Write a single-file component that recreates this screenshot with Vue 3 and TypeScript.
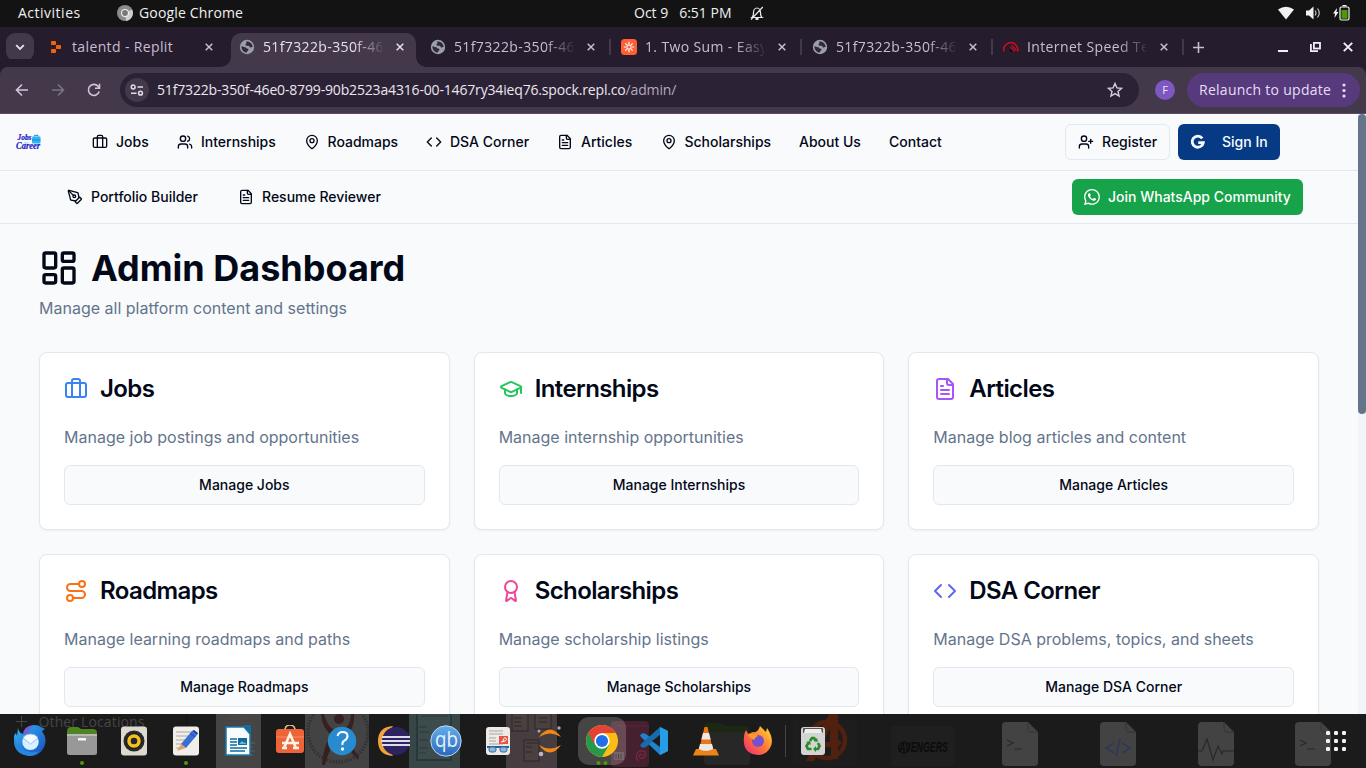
<script setup lang="ts">
interface NavItem { label: string; icon?: string; width: number }
interface Card { title: string; icon: string; color: string; text: string; action: string }
interface Tab { title: string; icon: string; active?: boolean; sep?: boolean }

const icons: Record<string, string> = {
  briefcase: '<path d="M16 20V4a2 2 0 0 0-2-2h-4a2 2 0 0 0-2 2v16"/><rect width="20" height="14" x="2" y="6" rx="2"/>',
  users: '<path d="M16 21v-2a4 4 0 0 0-4-4H6a4 4 0 0 0-4 4v2"/><circle cx="9" cy="7" r="4"/><path d="M22 21v-2a4 4 0 0 0-3-3.87"/><path d="M16 3.13a4 4 0 0 1 0 7.75"/>',
  pin: '<path d="M20 10c0 4.993-5.539 10.193-7.399 11.799a1 1 0 0 1-1.202 0C9.539 20.193 4 14.993 4 10a8 8 0 0 1 16 0"/><circle cx="12" cy="10" r="3"/>',
  code: '<path d="m16 18 6-6-6-6"/><path d="m8 6-6 6 6 6"/>',
  file: '<path d="M15 2H6a2 2 0 0 0-2 2v16a2 2 0 0 0 2 2h12a2 2 0 0 0 2-2V7Z"/><path d="M14 2v4a2 2 0 0 0 2 2h4"/><path d="M10 9H8"/><path d="M16 13H8"/><path d="M16 17H8"/>',
  userPlus: '<path d="M16 21v-2a4 4 0 0 0-4-4H6a4 4 0 0 0-4 4v2"/><circle cx="9" cy="7" r="4"/><path d="M19 8v6"/><path d="M22 11h-6"/>',
  pen: '<path d="M15.707 21.293a1 1 0 0 1-1.414 0l-1.586-1.586a1 1 0 0 1 0-1.414l5.586-5.586a1 1 0 0 1 1.414 0l1.586 1.586a1 1 0 0 1 0 1.414z"/><path d="m18 13-1.375-6.874a1 1 0 0 0-.746-.776L3.235 2.028a1 1 0 0 0-1.207 1.207L5.35 15.879a1 1 0 0 0 .776.746L13 18"/><path d="m2.3 2.3 7.286 7.286"/><circle cx="11" cy="11" r="2"/>',
  dashboard: '<rect width="7" height="9" x="3" y="3" rx="1"/><rect width="7" height="5" x="14" y="3" rx="1"/><rect width="7" height="9" x="14" y="12" rx="1"/><rect width="7" height="5" x="3" y="16" rx="1"/>',
  cap: '<path d="M21.42 10.922a1 1 0 0 0-.019-1.838L12.83 5.18a2 2 0 0 0-1.66 0L2.6 9.08a1 1 0 0 0 0 1.832l8.57 3.908a2 2 0 0 0 1.66 0z"/><path d="M22 10v6"/><path d="M6 12.5V16a6 3 0 0 0 12 0v-3.5"/>',
  route: '<circle cx="6" cy="19" r="3"/><path d="M9 19h8.5a3.5 3.5 0 0 0 0-7h-11a3.5 3.5 0 0 1 0-7H15"/><circle cx="18" cy="5" r="3"/>',
  award: '<path d="m15.477 12.89 1.515 8.526a.5.5 0 0 1-.81.47l-3.58-2.687a1 1 0 0 0-1.197 0l-3.586 2.686a.5.5 0 0 1-.81-.469l1.514-8.526"/><circle cx="12" cy="8" r="6"/>',
}

const tabIcons: Record<string, string> = {
  replit: '<g fill="#f26207"><rect x="3" y="2" width="5" height="4" rx=".7"/><rect x="8" y="6" width="5" height="4" rx=".7"/><rect x="3" y="10" width="5" height="4" rx=".7"/></g>',
  globe: '<circle cx="8" cy="8" r="7.2" fill="#9aa0a6"/><path d="M2.4 7.2c1.500-.2 2 .8 3.800 1 1 .2 1 1.300 2 1.300 1.300 0 1.600.8 1 1.800-.5.8-1.200 1-1.400 2.300C4.800 13.200 2.300 10.800 2.400 7.200M7 2.600c3.300-.6 6.600 2 6.700 5.500-1.200-.6-1.300.6-2.400.3-1-.2-.6-1.500-1.800-1.700-1.300-.2-2.500.4-3-.6-.5-1 .8-1.200 1-2z" fill="#33293c"/>',
  two: '<rect width="16" height="16" rx="3.5" fill="#ff5f33"/><g stroke="#fff" stroke-width="1.200"><path d="M8 2.800v10.400M2.800 8h10.400M4.300 4.300l7.400 7.400M11.700 4.300l-7.400 7.400"/></g><circle cx="8" cy="8" r="1.500" fill="#ff5f33"/>',
  speed: '<g fill="none" stroke="#d40d18" stroke-width="1.500"><path d="M1 12.500A7.200 7.200 0 0 1 4.500 4.600Q9 2 12.500 5.500 15.300 8.500 15 12.500"/><path d="m8.500 6.200 5 5.300M7.500 8.200l4 4.300" stroke-width="1.200"/></g><circle cx="8" cy="11.500" r="1.200" fill="#0c0810"/>',
}

const tabs: Tab[] = [
  { title: 'talentd - Replit', icon: 'replit' },
  { title: '51f7322b-350f-46', icon: 'globe', active: true },
  { title: '51f7322b-350f-46', icon: 'globe', sep: true },
  { title: '1. Two Sum - Easy', icon: 'two', sep: true },
  { title: '51f7322b-350f-46', icon: 'globe', sep: true },
  { title: 'Internet Speed Te', icon: 'speed', sep: true },
]

const nav: NavItem[] = [
  { label: 'Jobs', icon: 'briefcase', width: 85 },
  { label: 'Internships', icon: 'users', width: 126.5 },
  { label: 'Roadmaps', icon: 'pin', width: 122.5 },
  { label: 'DSA Corner', icon: 'code', width: 131 },
  { label: 'Articles', icon: 'file', width: 103.5 },
  { label: 'Scholarships', icon: 'pin', width: 138.5 },
  { label: 'About Us', width: 90 },
  { label: 'Contact', width: 60 },
]

const cards: Card[] = [
  { title: 'Jobs', icon: 'briefcase', color: '#3b82f6', text: 'Manage job postings and opportunities', action: 'Manage Jobs' },
  { title: 'Internships', icon: 'cap', color: '#22c55e', text: 'Manage internship opportunities', action: 'Manage Internships' },
  { title: 'Articles', icon: 'file', color: '#a855f7', text: 'Manage blog articles and content', action: 'Manage Articles' },
  { title: 'Roadmaps', icon: 'route', color: '#f97316', text: 'Manage learning roadmaps and paths', action: 'Manage Roadmaps' },
  { title: 'Scholarships', icon: 'award', color: '#ec4899', text: 'Manage scholarship listings', action: 'Manage Scholarships' },
  { title: 'DSA Corner', icon: 'code', color: '#6366f1', text: 'Manage DSA problems, topics, and sheets', action: 'Manage DSA Corner' },
]

const dots = [0, 1, 2].flatMap((r) => [0, 1, 2].map((c) => ({ x: c * 8, y: r * 8 })))
</script>

<template>
  <div class="screen">
    <div class="gnome">
      <span class="activities">Activities</span>
      <svg class="g-chrome" width="16" height="16" viewBox="0 0 16 16"><circle cx="8" cy="8" r="8" fill="#8b8b8b" /><path d="M8 8 15 4.500A8 8 0 0 1 9 16z" fill="#cfcfcf" /><circle cx="8" cy="8" r="4" fill="#eee" /><circle cx="8" cy="8" r="2.900" fill="#777" /></svg>
      <span class="app-name">Google Chrome</span>
      <span class="clock">Oct 9&nbsp;&nbsp; 6:51 PM</span>
      <svg class="bell" width="14" height="15" viewBox="0 0 14 15" fill="none" stroke="#e8e8e8" stroke-width="1.200"><path d="M2 11.500c1.500-1 1.500-3 1.500-5C3.500 4 5 2 7 2s3.500 2 3.500 4.500c0 2 0 4 1.500 5zM12.800 1 1 13.500" /><path d="M5.500 13h3" stroke-width="2" /></svg>
      <div class="status">
        <svg width="16" height="14" viewBox="0 0 16 14"><path d="M0 3.500Q8-2 16 3.500L8 13.500z" fill="#f2f2f2" /></svg>
        <svg width="15" height="14" viewBox="0 0 15 14"><path d="M0 4.500h3L7.500.5v13L3 9.500H0z" fill="#f2f2f2" /><path d="M9 4.500q2 2.500 0 5M11.500 2.500q3.500 4.500 0 9" fill="none" stroke="#d0d0d0" stroke-width="1.100" /></svg>
        <svg width="17" height="16" viewBox="0 0 17 16"><path d="M4 3 0 8.500h2L1.500 13l4-6H3.500z" fill="#f2f2f2" /><rect x="7" y="2" width="9" height="13" rx="1.500" fill="none" stroke="#f2f2f2" stroke-width="1.200" /><path d="M9.500.7h4" stroke="#f2f2f2" stroke-width="1.400" /><rect x="8.500" y="5" width="6" height="8.700" fill="#4e9a06" /></svg>
      </div>
    </div>

    <div class="tabstrip">
      <div class="tab-search"><svg width="10" height="7" viewBox="0 0 10 7"><path d="m1.200 1.200 3.800 3.800 3.800-3.800" fill="none" stroke="#e8dff0" stroke-width="1.800" /></svg></div>
      <div class="tabs">
        <div v-for="(t, i) in tabs" :key="i" class="tab" :class="{ active: t.active, sep: t.sep }">
          <svg class="fav" width="16" height="16" viewBox="0 0 16 16" v-html="tabIcons[t.icon]"></svg>
          <span class="tab-title" :class="{ fade: i > 0 }">{{ t.title }}</span>
          <svg class="close" width="8" height="8" viewBox="0 0 8 8"><path d="m.7.7 6.600 6.600M7.300.7.7 7.300" stroke="currentColor" stroke-width="1.500" /></svg>
        </div>
      </div>
      <svg class="plus" width="11" height="11" viewBox="0 0 11 11"><path d="M5.500 0v11M0 5.500h11" stroke="#c9bdd3" stroke-width="1.600" /></svg>
      <div class="win">
        <svg width="10" height="10" viewBox="0 0 10 10"><path d="M0 9h10" stroke="#f2eef5" stroke-width="2" /></svg>
        <svg width="11" height="10" viewBox="0 0 11 10" fill="none" stroke="#f2eef5" stroke-width="1.800"><rect x="3.900" y=".9" width="6.100" height="5.600" /><path d="M.9 2v7.100h7.100" /></svg>
        <svg width="10" height="10" viewBox="0 0 10 10"><path d="m.8.8 8.400 8.400M9.200.8.8 9.200" stroke="#f2eef5" stroke-width="1.900" /></svg>
      </div>
    </div>

    <div class="toolbar">
      <div class="toolbar-nav">
        <svg width="14" height="14" viewBox="0 0 14 14" fill="none" stroke="#d2c4dc" stroke-width="1.600"><path d="M13 7H1.500M7 1.500 1.500 7 7 12.500" /></svg>
        <svg width="14" height="14" viewBox="0 0 14 14" fill="none" stroke="#7d7386" stroke-width="1.600"><path d="M1 7h11.500M7 1.500 12.500 7 7 12.500" /></svg>
        <svg width="14" height="14" viewBox="0 0 14 14" fill="none" stroke="#d2c4dc" stroke-width="1.600"><path d="M12.200 8.500A5.500 5.500 0 1 1 11 3.200L12.500 5M12.500.8v4.400H8" /></svg>
      </div>
      <div class="omnibox">
        <span class="site"><svg width="14" height="12" viewBox="0 0 14 12" fill="none" stroke="#e4dbe9" stroke-width="1.500"><circle cx="3.200" cy="3" r="1.900" /><path d="M7.500 3H13M1 9.200h5.500" /><circle cx="10.500" cy="9.200" r="1.900" /></svg></span>
        <span class="url">51f7322b-350f-46e0-8799-90b2523a4316-00-1467ry34ieq76.spock.repl.co<span>/admin/</span></span>
        <svg class="star" width="16" height="16" viewBox="0 0 16 16"><path d="m8 1.500 1.900 4.400 4.700.4-3.600 3.100 1.100 4.700L8 11.600l-4.100 2.500L5 9.400 1.400 6.300l4.700-.4z" fill="none" stroke="#d8cce0" stroke-width="1.400" /></svg>
      </div>
      <span class="avatar">F</span>
      <div class="relaunch"><span>Relaunch to update</span><svg width="4" height="15" viewBox="0 0 4 15" fill="#eadcf7"><circle cx="2" cy="2" r="1.600" /><circle cx="2" cy="7.500" r="1.600" /><circle cx="2" cy="13" r="1.600" /></svg></div>
    </div>

    <div class="page">
      <div class="content">
        <header class="top-nav">
          <svg class="logo" width="26" height="18" viewBox="0 0 26 18">
            <text x="8" y="10.500" fill="#54c4ff" font-size="4" font-family="Liberation Serif, serif" font-style="italic">for</text>
            <rect x="16" y="3.500" width="8.500" height="7" rx="1" fill="#2fb4f5" /><path d="M18.500 3.500V2.300H22v1.200M16 7h8.500" fill="none" stroke="#1689d6" />
            <g fill="#1717c4" stroke="#1717c4" stroke-width=".2" font-family="Liberation Serif, serif" font-style="italic" font-weight="bold"><text x="1.500" y="7" font-size="8.500" textLength="14" lengthAdjust="spacingAndGlyphs">Jobs</text><text x="0" y="16" font-size="9.500" textLength="24" lengthAdjust="spacingAndGlyphs">Career</text></g>
          </svg>
          <nav class="links">
            <a v-for="n in nav" :key="n.label" :style="{ width: n.width + 'px' }">
              <svg v-if="n.icon" class="line" width="16" height="16" viewBox="0 0 24 24" v-html="icons[n.icon]"></svg>{{ n.label }}
            </a>
          </nav>
          <button class="btn register"><svg class="line" width="16" height="16" viewBox="0 0 24 24" v-html="icons.userPlus"></svg>Register</button>
          <button class="btn signin"><svg width="16" height="16" viewBox="0 0 16 16"><path d="M12.300 4.300A5.600 5.600 0 1 0 13.300 8.700H8.200" fill="none" stroke="#f8fafc" stroke-width="2.800" /></svg>Sign In</button>
        </header>
        <div class="sub-nav">
          <a><svg class="line" width="16" height="16" viewBox="0 0 24 24" v-html="icons.pen"></svg>Portfolio Builder</a>
          <a><svg class="line" width="16" height="16" viewBox="0 0 24 24" v-html="icons.file"></svg>Resume Reviewer</a>
          <button class="btn whatsapp"><svg width="16" height="16" viewBox="0 0 16 16"><path d="M13.601 2.326A7.850 7.850 0 0 0 7.994 0C3.627 0 .068 3.558.064 7.926c0 1.399.366 2.760 1.057 3.965L0 16l4.204-1.102a7.900 7.900 0 0 0 3.790.965h.004c4.368 0 7.926-3.558 7.930-7.930A7.900 7.900 0 0 0 13.600 2.326zM7.994 14.521a6.600 6.600 0 0 1-3.356-.920l-.240-.144-2.494.654.666-2.433-.156-.251a6.560 6.560 0 0 1-1.007-3.505c0-3.626 2.957-6.584 6.591-6.584a6.560 6.560 0 0 1 4.660 1.931 6.560 6.560 0 0 1 1.928 4.660c-.004 3.639-2.961 6.592-6.592 6.592m3.615-4.934c-.197-.099-1.170-.578-1.353-.646-.182-.065-.315-.099-.445.099-.133.197-.513.646-.627.775-.114.133-.232.148-.430.050-.197-.100-.836-.308-1.592-.985-.590-.525-.985-1.175-1.103-1.372-.114-.198-.011-.304.088-.403.087-.088.197-.232.296-.346.100-.114.133-.198.198-.330.065-.134.034-.248-.015-.347-.050-.099-.445-1.076-.612-1.470-.160-.389-.323-.335-.445-.340-.114-.007-.247-.007-.380-.007a.730.730 0 0 0-.529.247c-.182.198-.691.677-.691 1.654s.710 1.916.810 2.049c.098.133 1.394 2.132 3.383 2.992.470.205.840.326 1.129.418.475.152.904.129 1.246.080.380-.058 1.171-.480 1.338-.943.164-.464.164-.860.114-.943-.049-.084-.182-.133-.380-.232" fill="#fff" /></svg>Join WhatsApp Community</button>
        </div>

        <main>
          <h1><svg class="line" width="40" height="40" viewBox="0 0 24 24" v-html="icons.dashboard"></svg>Admin Dashboard</h1>
          <p class="lead">Manage all platform content and settings</p>
          <div class="grid">
            <section v-for="c in cards" :key="c.title" class="card">
              <h2><svg class="line" width="24" height="24" viewBox="0 0 24 24" :style="{ color: c.color }" v-html="icons[c.icon]"></svg>{{ c.title }}</h2>
              <p>{{ c.text }}</p>
              <button>{{ c.action }}</button>
            </section>
          </div>
        </main>
      </div>
      <div class="scrollbar"><div class="thumb"></div></div>
    </div>

    <div class="dock">
      <svg class="ghosts" width="1366" height="54" viewBox="0 0 1366 54">
        <defs><clipPath id="figure"><rect x="305" y="0" width="64" height="54" /></clipPath></defs>
        <path d="M16 7.500h11M21.500 2v11" stroke="#444" />
        <text x="38.500" y="13" class="ghost-text" textLength="106" fill="#454545">Other Locations</text>
        <path d="M186.500 0v54" stroke="#151515" />
        <rect x="216" y="0" width="45" height="54" fill="#454545" />
        <g stroke="#5b4a49" stroke-width=".8"><path d="M231 2h14M226 5h24M220 9h35" /><path d="M249 29h6M249 33h4M249 37h6M249 41h4" stroke="#666" /></g>
        <rect x="305" y="0" width="64" height="54" fill="#434343" />
        <g clip-path="url(#figure)">
          <circle cx="338" cy="18" r="30" fill="none" stroke="#2b2b2b" stroke-width="3.500" stroke-dasharray="1.500 1.500" opacity=".7" />
          <g fill="#362020"><path d="M324 0q3 13 12 17l6 0q9-5 9-17l3 0q1 14-7 20l-14 2q-11-7-12-22zM331 21q-8 12-9 30l3 0q4-17 12-25zM343 21q4 14 15 25l1-3q-8-9-9-22z" /><circle cx="339" cy="5" r="5" /></g>
        </g>
        <rect x="409" y="0" width="51" height="54" fill="#384648" />
        <path d="M417 0v46h34V0" fill="#3d4b4c" stroke="#25393c" stroke-width="2" /><path d="M421 2h27M419 13h8M419 18h10M419 26h9M419 34h9M419 39h7" stroke="#28383a" />
        <rect x="506" y="0" width="51" height="54" fill="#463d40" />
        <g fill="#49403f" stroke="#392c30" stroke-width="1.500"><path d="M512 0v17h16V0M535 0v15h16V0" /><rect x="524" y="26" width="15" height="21" /></g><path d="M514 4h8M514 8h7M514 12h8M539 4h8M539 8h8M526 29h12M526 33h6M526 38h6" stroke="#302529" />
        <rect x="611" y="7" width="38" height="46" rx="4" fill="#45202e" /><path d="M616 12h33" stroke="#642238" /><path d="M638 47q-4-7 2-10 7-1 5 5-4 5-6 0 2-3 4-1" fill="none" stroke="#792943" stroke-width="1.300" />
        <rect x="578" y="3" width="48" height="48" rx="11" fill="#ffffff" opacity=".19" />
        <path d="M614 38h10v8h-10z" fill="#77656c" /><path d="M616 40v5M618.500 40v5M621 40v5" stroke="#55434b" />
        <path d="M704 13q0-4 4-4h13l5 3h20q3 0 3 4v3h-45z" fill="#1b2913" /><rect x="704" y="18" width="46" height="33" rx="4" fill="#272727" />
        <rect x="793" y="0" width="64" height="52" fill="#1e1d1d" />
        <circle cx="827" cy="26" r="18" fill="none" stroke="#52200f" stroke-width="4.500" /><path d="m829 0 9 0v45h-7V33h-10l-7 14h-8zM830 14l-6 14h6z" fill="#52200f" /><path d="m834 22 8 7-8 7z" fill="#52200f" />
        <rect x="891" y="12" width="64" height="40" rx="3" fill="#1f1f1f" /><circle cx="904" cy="33.500" r="5.500" fill="none" stroke="#0c0c0c" stroke-width="1.200" /><text x="899" y="38" class="avengers" textLength="49" lengthAdjust="spacingAndGlyphs" fill="#0c0c0c">AVENGERS</text>
        <g v-for="x in [1002, 1100, 1198, 1295]" :key="x"><path :d="`M${x + 4} 8h22l10 10v30q0 4-4 4h-28q-4 0-4-4V12q0-4 4-4`" fill="#434343" /><path :d="`M${x + 26} 8v7q0 3 3 3h7`" fill="none" stroke="#343434" /></g>
        <g fill="none" stroke="#292929" stroke-width="1.200"><path d="m1007 26 6 3-6 3M1014 35h8M1300 26l6 3-6 3M1307 35h8M1198 37h4l5-12 6 21 5-14 4 8 1-3h11" /><path d="m1114 29-8 5 8 5M1122 29l8 5-8 5M1120 25l-4 17" stroke="#303858" stroke-width="1.700" /></g>
      </svg>

      <div class="apps">
        <svg viewBox="0 0 32 32"><defs><linearGradient id="tb" x2="1" y2="1"><stop stop-color="#35b5f5" /><stop offset="1" stop-color="#154dbd" /></linearGradient></defs><path d="M4 3q1 5 5 6Q11 1 20 0q5 0 7 2l4 2-3 2q6 8 2 16-4 9-14 9Q1 30 0 17q-1-7 2-9l1 3z" fill="url(#tb)" /><path d="M9 10Q9 1 20 0q-5 4-5 9z" fill="#6a63dc" /><ellipse cx="16.500" cy="17" rx="8.200" ry="8" fill="#d7efff" /><path d="m9 13 7.500 6L24 13q-2-4-7.500-4T9 13" fill="#f5fbff" stroke="#75b5eb" stroke-width=".8" /><path d="M0 13q3 12 15 14 6 1 10-1-4 5-10 5Q1 29 0 16z" fill="#2787e0" /></svg>
        <svg viewBox="0 0 32 32"><path d="M1 7q0-5 4-5h7l3 2h12q4 0 4 4v4H1z" fill="#4e8520" /><rect x="1" y="9" width="30" height="21" rx="2.500" fill="#989898" /><path d="M1 10h30" stroke="#b8b8b8" stroke-width="2" /><rect x="12" y="13" width="8" height="2.500" fill="#f5f5f5" /></svg>
        <svg viewBox="0 0 32 32"><rect x="3" y="1.500" width="26" height="29" rx="3" fill="#ded9cf" /><circle cx="16" cy="16" r="10.500" fill="#292929" /><circle cx="16" cy="16" r="7.300" fill="#f3c020" stroke="#111" /><circle cx="16" cy="16" r="3.300" fill="#252525" /></svg>
        <svg viewBox="0 0 32 32"><rect x="3" y="1.500" width="26" height="29" rx="3" fill="#f1eee9" /><path d="M6 7h17M6 11h13M6 15h15M6 19h8M6 23h7" stroke="#aca79e" /><path d="m11 19 11-13 5 4-11 13z" fill="#386ed6" /><path d="m22 6 2-1 4 3-1 2z" fill="#173f98" /><path d="m11 19 5 4-9 3z" fill="#dca170" /><path d="m20 8 5 4" stroke="#174aaa" /></svg>
        <svg viewBox="0 0 32 32"><path d="M4 2h18l6 7v21H4z" fill="#f9fcff" stroke="#177cac" stroke-width="1.500" /><path d="M21 0h8v9z" fill="#176c9d" /><path d="M8 14h7M8 17h7M8 20h7M8 23h17M8 26h15" stroke="#126a9c" stroke-width="1.300" /><rect x="16" y="13" width="9" height="7" fill="#126a9c" /><path d="m17 19 3-3 2 2 1-1 1 2" fill="#69bdc9" /></svg>
        <svg viewBox="0 0 32 32"><path d="M11 6V4q1-4 5-4t5 4v2" fill="none" stroke="#eac286" stroke-width="1.500" /><rect x="2" y="4" width="28" height="24" rx="3" fill="#ee6439" /><path d="M2 12h28" stroke="#f68c69" /><path d="m10 23 6-14 6 14M8 18h17M8 23h5M19 23h6" fill="none" stroke="#fff4e9" stroke-width="2.600" /></svg>
        <svg viewBox="0 0 32 32"><circle cx="16" cy="16" r="14.200" fill="#278bd0" /><path d="M11.500 11q1-4 5-4 5 0 5 4 0 3-3.500 5-2 1-1.500 4" fill="none" stroke="#fff" stroke-width="2" /><circle cx="16.500" cy="24" r="1.700" fill="#fff" /></svg>
        <svg viewBox="0 0 32 32"><path d="M15 1Q0 2 0 16t15 15Q4 16 15 1" fill="#f4a33b" /><circle cx="18" cy="16" r="14" fill="#2d2361" /><g stroke="#dcdde9" stroke-width="2"><path d="M4 12h28M3 16h29M4 20h28" /></g></svg>
        <svg viewBox="0 0 32 32"><defs><linearGradient id="qb" x2="0" y2="1"><stop stop-color="#65aeea" /><stop offset="1" stop-color="#2b67bd" /></linearGradient></defs><circle cx="16" cy="16" r="15.200" fill="url(#qb)" stroke="#b8d8f2" /><text x="5" y="21.500" class="qb" textLength="23" lengthAdjust="spacingAndGlyphs">qb</text></svg>
        <svg viewBox="0 0 32 32"><rect x="4" y="2" width="24" height="28" rx="3" fill="#eeeae7" /><path d="M7 6h14M7 9h14M7 13h7M7 16h7M7 19h14" stroke="#aaa5a1" /><rect x="17" y="11" width="9" height="8" fill="#e45546" /><path d="M19 17q7-1 5-4-3-1-3 4" stroke="#fff" fill="none" /><path d="M5 22h22" stroke="#245fa5" stroke-width="2" /><rect x="7" y="22" width="7" height="5" rx="2" fill="#8fb9d2" stroke="#336bad" /><rect x="18" y="22" width="7" height="5" rx="2" fill="#8fb9d2" stroke="#336bad" /></svg>
        <svg viewBox="0 0 32 32"><path d="M5 12Q16-3 27 12 16 5 5 12M5 20q11 15 22 0-11 7-22 0" fill="#ef8815" /><circle cx="5" cy="6" r="1.500" fill="#aaa8a9" /><circle cx="25" cy="3" r="1.700" fill="#aaa8a9" /><circle cx="7" cy="29" r="2.300" fill="#b7b7bf" /></svg>
        <svg viewBox="0 0 32 32"><circle cx="16" cy="16" r="16" fill="#fbbd13" /><path d="M16 16 2.200 8A16 16 0 0 0 16 32l7-12z" fill="#269849" /><path d="M2.200 8a16 16 0 0 1 27.600 0H16L9 20z" fill="#e44234" /><circle cx="16" cy="16" r="7.700" fill="#fff" /><circle cx="16" cy="16" r="6.100" fill="#226ee7" /></svg>
        <svg viewBox="0 0 32 32"><path d="m22 2 8 4v20l-8 4L3 12l-1-2 3-2 3 1 14 11z" fill="#1f83cb" /><path d="m22 2 8 4v20l-8 4z" fill="#289de7" /><path d="M22 10 8 22l-3 1-3-2 1-2L22 2z" fill="#186ca9" /><path d="m22 10-8 6 8 6z" fill="#1c1c1c" /></svg>
        <svg viewBox="0 0 32 32"><path d="m6 24-3 6.500h26L26 24z" fill="#eb8416" /><path d="M14.500 2h3L23 25q-7 3.500-14 0z" fill="#ef7514" /><path d="m13 8-1.700 6.500h9.400L19 8zM10 19l-1.300 5q7 4 14.600 0L22 19z" fill="#ece9e5" /></svg>
        <svg viewBox="0 0 32 32"><defs><linearGradient id="ff" x1="1" x2="0" y1="0" y2="1"><stop stop-color="#ffe332" /><stop offset=".5" stop-color="#ff7836" /><stop offset="1" stop-color="#ef247a" /></linearGradient></defs><path d="m4 5 2 4 5-2Q16 8 18 1l6 6 1-4q7 10 4 18-4 9-13 9Q3 29 2 18q-1-8 2-13" fill="url(#ff)" /><circle cx="16" cy="16" r="6" fill="#7850cc" /><path d="M6 10q6-3 10 1-3 1-4 4-3-1-6-5" fill="#ff9d24" /></svg>
        <i class="divider"></i>
        <svg viewBox="0 0 32 32"><rect x="4" y="2" width="24" height="28" rx="3" fill="#d4d4d4" /><rect x="6" y="3" width="20" height="5" rx="1" fill="#555" /><path d="M8 4h16l1 4H7z" fill="#eee" /><g fill="none" stroke="#288b28" stroke-width="2.700"><path d="m13 16 2-3h2l2 3M21 18l1.500 3-1.500 3h-3M14.500 24H11l-1.500-3 2-3" /></g><path d="m20 13 1 4-4-1zM19 21v6l-3-3zM9 17l4-1 1 4z" fill="#288b28" /></svg>
      </div>
      <svg class="grid-dots" width="20" height="20" viewBox="0 0 20 20" fill="#f3f3f3"><rect v-for="(d, i) in dots" :key="i" :x="d.x" :y="d.y" width="4" height="4" rx="1.200" /></svg>
      <svg class="running" width="1366" height="6" viewBox="0 0 1366 6" fill="#4e9a06"><circle cx="82" cy="3" r="2" /><circle cx="186" cy="3" r="2" /><circle cx="598.500" cy="3" r="2" /><circle cx="605.500" cy="3" r="2" /></svg>
    </div>
  </div>
</template>

<style>
html, body { margin: 0; overflow: hidden; background: #131313; }
</style>

<style scoped>
* { box-sizing: border-box; }
svg { display: block; flex: none; }
.screen { width: 1366px; height: 768px; overflow: hidden; display: flex; flex-direction: column; position: relative; font-family: "Open Sans", "Noto Sans", sans-serif; }
.gnome { height: 27px; flex: none; background: #131313; color: #f0f0f0; font-size: 14px; display: grid; grid-template-columns: 99px 22px 495px 116px 1fr auto; align-items: center; padding: 0 16px 0 18px; line-height: 25px; white-space: nowrap; }
.gnome > span { padding-bottom: 2px; }
.g-chrome { margin-top: -1px; }
.activities { letter-spacing: .5px; }
.app-name { letter-spacing: .16px; }
.status { display: flex; align-items: center; gap: 12px; margin-top: -2px; }
.tabstrip { height: 40px; flex: none; background: #251c2e; display: flex; align-items: center; padding-left: 6px; }
.tab-search { width: 28px; height: 28px; border-radius: 9px; background: #43394b; display: grid; place-items: center; margin-right: 6px; }
.tabs { display: flex; height: 40px; }
.tab { width: 191px; height: 34px; margin-top: 6px; display: flex; align-items: center; padding: 0 18px 6px 8px; color: #c9bdd3; position: relative; font-size: 14px; }
.fav { margin-right: 8px; }
.tab-title { flex: none; width: 119px; margin-right: 14px; white-space: nowrap; line-height: 20px; letter-spacing: .37px; }
.fade { -webkit-mask-image: linear-gradient(90deg, #000 76%, transparent 103%); mask-image: linear-gradient(90deg, #000 76%, transparent 103%); }
.tab.active { width: 185px; margin-right: 6px; padding-right: 12px; background: #43394b; border-radius: 10px 10px 0 0; color: #e9e0ee; }
.tab.active::before, .tab.active::after { content: ""; position: absolute; bottom: 0; width: 10px; height: 10px; }
.tab.active::before { left: -10px; background: radial-gradient(circle at 0 0, transparent 9.5px, #43394b 10px); }
.tab.active::after { right: -10px; background: radial-gradient(circle at 100% 0, transparent 9.5px, #43394b 10px); }
.tab.sep::after { content: ""; position: absolute; right: 2px; top: 6px; width: 2px; height: 16px; background: #43394b; }
.plus { margin-left: 7px; }
.win { display: flex; gap: 22px; margin-left: auto; padding-right: 13px; }
.toolbar { height: 47px; flex: none; background: #43394b; border-radius: 8px 8px 0 0; box-shadow: 0 -8px 0 -0.1px #251c2e; display: flex; align-items: center; border-bottom: 1px solid #584e60; }
.toolbar-nav { width: 120px; display: flex; gap: 22px; padding-left: 15px; }
.omnibox { width: 1019px; height: 34px; border-radius: 17px; background: #2c2235; display: flex; align-items: center; padding: 0 16px 0 5px; }
.site { width: 24px; height: 24px; border-radius: 12px; background: #43394b; display: grid; place-items: center; margin-right: 8px; }
.url { color: #ede6f1; font-size: 14px; letter-spacing: -.165px; white-space: nowrap; padding-bottom: 2px; }
.url span { color: #b5a9bd; }
.star { margin-left: auto; }
.avatar { width: 20px; height: 20px; border-radius: 10px; background: #7e57c2; color: #f0e6fa; font-size: 11px; line-height: 20px; text-align: center; margin: 0 12px 0 16px; }
.relaunch { width: 173px; height: 34px; border-radius: 17px; background: #563a7c; color: #eadcf7; display: flex; align-items: center; justify-content: space-between; padding: 0 14px 0 12px; font-size: 14px; white-space: nowrap; letter-spacing: .27px; }
.relaunch span { padding-bottom: 1px; }
.page { height: 600px; flex: none; display: flex; overflow: hidden; background: #f8fafc; color: #020817; font-family: Inter, sans-serif; }
.content { width: 1358px; }
.scrollbar { width: 8px; height: 600px; background: #f1f5f9; }
.thumb { height: 300px; border-radius: 4px; background: #64748b; }
.line { fill: none; stroke: currentColor; stroke-width: 2; stroke-linecap: round; stroke-linejoin: round; }
.top-nav { height: 57px; border-bottom: 1px solid #e2e8f0; display: flex; align-items: center; padding-left: 16px; font-size: 14px; line-height: 20px; font-weight: 500; }
.logo { margin-right: 50px; }
.links { display: flex; width: 973px; }
.links a { display: flex; align-items: center; gap: 8px; white-space: nowrap; }
.btn { font: 500 14px/20px Inter, sans-serif; height: 36px; border-radius: 6px; border: 1px solid transparent; display: flex; align-items: center; gap: 8px; padding: 0 11px; white-space: nowrap; flex: none; color: inherit; }
.register { width: 105px; background: #f8fafc; border-color: #e2e8f0; padding: 0 12px; margin-right: 8px; }
.signin { width: 102px; background: #073a84; color: #f8fafc; gap: 16px; }
.sub-nav { height: 53px; border-bottom: 1px solid #e2e8f0; display: flex; align-items: center; padding: 0 55px 0 67px; font-size: 14px; line-height: 20px; font-weight: 500; }
.sub-nav a { display: flex; gap: 8px; align-items: center; width: 171px; }
.whatsapp { margin-left: auto; width: 231px; background: #16a34a; color: #fff; }
main { padding: 24px 39px; }
h1 { display: flex; align-items: center; gap: 12px; margin: 0; font-size: 36px; line-height: 40px; font-weight: 700; }
.lead { margin: 8px 0 32px; font-size: 16px; line-height: 24px; color: #64748b; }
.grid { display: grid; grid-template-columns: repeat(3, 1fr); gap: 24px; }
.card { height: 178px; border: 1px solid #e2e8f0; border-radius: 8px; background: #fff; padding: 24px; box-shadow: 0 1px 2px rgba(0, 0, 0, .05); }
.card h2 { display: flex; align-items: center; gap: 12px; margin: 0; font-size: 24px; line-height: 24px; font-weight: 600; letter-spacing: -.6px; }
.card p { margin: 24px 0 16px; font-size: 16px; line-height: 24px; color: #64748b; }
.card button { display: block; width: 100%; height: 40px; padding: 0; border: 1px solid #e2e8f0; border-radius: 6px; background: #f8fafc; color: #020817; font: 500 14px/20px Inter, sans-serif; }
.dock { height: 54px; flex: none; background: #1b1b1b; position: relative; display: flex; align-items: center; }
.ghosts { position: absolute; left: 0; top: 0; overflow: visible; }
.ghost-text { font: 14px "Open Sans", sans-serif; }
.avengers { font: italic bold 14px "Liberation Sans", sans-serif; }
.qb { font: 21px "Open Sans", sans-serif; fill: #e6f2fc; }
.apps { position: relative; display: flex; align-items: center; gap: 20px; padding-left: 14px; }
.apps svg { width: 32px; height: 32px; }
.divider { width: 1px; height: 32px; background: #454545; margin: 0 -9px 0 -9px; }
.grid-dots { position: relative; margin-left: auto; margin-right: 20px; }
.running { position: absolute; left: 0; top: 46px; }
</style>
